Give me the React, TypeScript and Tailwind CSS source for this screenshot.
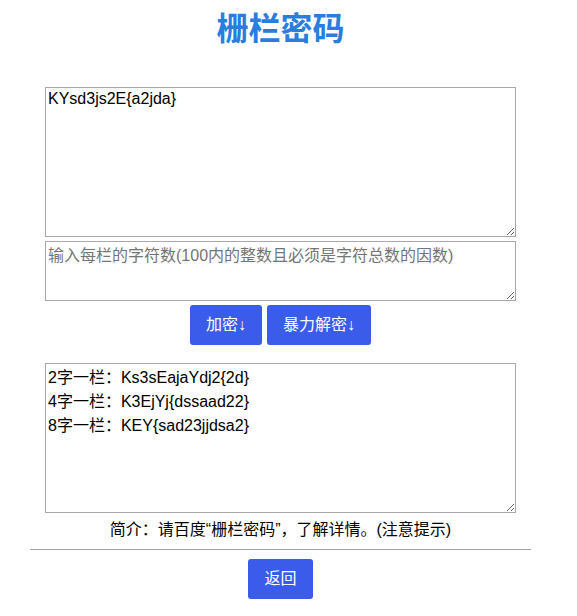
import React from "react";

const font = "font-['Liberation_Sans','Noto_Sans_CJK_SC',sans-serif]";

export default function App() {
  return (
    <div className={`w-[577px] min-h-[616px] bg-white ${font} text-[16px] text-black`}>
      <div className="ml-[30px] flex w-[501px] flex-col items-center">
        <h1 className="mt-[2px] text-[32px] font-bold leading-[48px] text-[#2a7ddf] font-['Noto_Sans_CJK_SC',sans-serif]">
          栅栏密码
        </h1>
        <textarea
          className={`mt-[37px] block h-[150px] w-[471px] border border-[#a9a9a9] px-[2px] py-[2px] text-[16px] leading-[18px] text-black outline-none ${font}`}
          defaultValue="KYsd3js2E{a2jda}"
        />
        <textarea
          className={`mt-[4px] block h-[60px] w-[471px] border border-[#a9a9a9] px-[2px] py-[2px] text-[16px] leading-[24px] text-black outline-none placeholder:text-[#757575] ${font}`}
          placeholder="输入每栏的字符数(100内的整数且必须是字符总数的因数)"
        />
        <div className="mt-[4px] flex gap-[5px]">
          <button className="h-[40px] w-[72px] rounded-[3px] bg-[#3b5beb] text-[16px] text-white">
            加密↓
          </button>
          <button className="h-[40px] w-[104px] rounded-[3px] bg-[#3b5beb] text-[16px] text-white">
            暴力解密↓
          </button>
        </div>
        <textarea
          className={`mt-[18px] block h-[150px] w-[471px] border border-[#a9a9a9] px-[2px] py-[2px] text-[16px] leading-[24px] text-black outline-none ${font}`}
          defaultValue={"2字一栏：Ks3sEajaYdj2{2d}\n4字一栏：K3EjYj{dssaad22}\n8字一栏：KEY{sad23jjdsa2}"}
        />
        <p className="mt-[5px] text-center leading-[24px]">
          简介：请百度“栅栏密码”，了解详情。(注意提示)
        </p>
        <hr className="mt-[7px] w-[501px] border-t border-[#a0a0a0]" />
        <button className="mt-[9px] h-[40px] w-[65px] rounded-[3px] bg-[#3b5beb] text-[16px] text-white">
          返回
        </button>
      </div>
    </div>
  );
}
